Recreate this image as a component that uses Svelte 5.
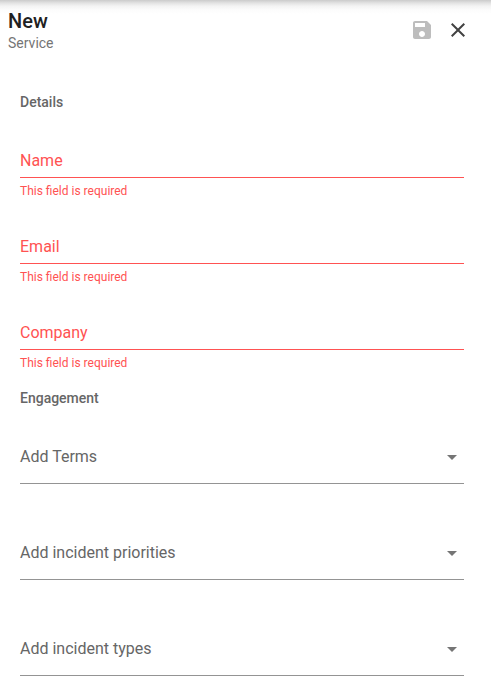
<script>
  let fields = $state([
    { id: 'name', label: 'Name', type: 'text', value: '' },
    { id: 'email', label: 'Email', type: 'email', value: '' },
    { id: 'company', label: 'Company', type: 'text', value: '' }
  ]);
  let choices = $state([
    { id: 'terms', label: 'Add Terms', value: '' },
    { id: 'priorities', label: 'Add incident priorities', value: '' },
    { id: 'types', label: 'Add incident types', value: '' }
  ]);
  const valid = $derived(fields.every((f) => f.value));
</script>

<main>
  <header>
    <div class="titles">
      <h1>New</h1>
      <p>Service</p>
    </div>
    <div class="actions">
      <button type="submit" form="service" aria-label="Save" disabled={!valid}>
        <svg viewBox="0 0 24 24" width="24" height="24" aria-hidden="true">
          <path d="M17 3H5c-1.110 0-2 .9-2 2v14c0 1.100.890 2 2 2h14c1.100 0 2-.9 2-2V7l-4-4zm-5 16c-1.660 0-3-1.340-3-3s1.340-3 3-3 3 1.340 3 3-1.340 3-3 3zm3-10H5V5h10v4z" />
        </svg>
      </button>
      <button type="button" aria-label="Close">
        <svg viewBox="0 0 24 24" width="24" height="24" aria-hidden="true">
          <path d="M19 6.410L17.590 5 12 10.590 6.410 5 5 6.410 10.590 12 5 17.590 6.410 19 12 13.410 17.590 19 19 17.590 13.410 12z" />
        </svg>
      </button>
    </div>
  </header>

  <form id="service" novalidate onsubmit={(e) => e.preventDefault()}>
    <section>
      <h2>Details</h2>
      <div class="fields">
        {#each fields as field (field.id)}
          <div class="field" class:invalid={!field.value}>
            <div class="control" class:filled={field.value}>
              <input id={field.id} type={field.type} bind:value={field.value} required />
              <label for={field.id}>{field.label}</label>
            </div>
            {#if !field.value}
              <p class="hint">This field is required</p>
            {/if}
          </div>
        {/each}
      </div>
    </section>

    <section>
      <h2>Engagement</h2>
      <div class="choices">
        {#each choices as choice (choice.id)}
          <div class="control tall" class:filled={choice.value}>
            <select id={choice.id} bind:value={choice.value}>
              <option value=""></option>
            </select>
            <label for={choice.id}>{choice.label}</label>
            <svg class="arrow" viewBox="0 0 24 24" width="24" height="24" aria-hidden="true">
              <path d="M7 10l5 5 5-5z" />
            </svg>
          </div>
        {/each}
      </div>
    </section>
  </form>
</main>

<style>
  :global(body) {
    margin: 0;
    background: #fff;
  }
  main {
    font-family: Roboto, 'Liberation Sans', sans-serif;
    color: #666;
    background: linear-gradient(#cbcbcb, #e2e2e2 3px, #f3f3f3 6px, #fcfcfc 10px, #fff 14px) no-repeat;
    padding-bottom: 19px;
  }
  h1,
  h2,
  p {
    margin: 0;
  }
  header {
    display: flex;
    justify-content: space-between;
    align-items: flex-start;
    padding: 9px 15px 0 8px;
  }
  h1 {
    font-size: 20px;
    line-height: 24px;
    font-weight: 500;
    color: #212121;
  }
  .titles p {
    font-size: 14px;
    line-height: 20px;
    color: #757575;
  }
  .actions {
    display: flex;
    padding-top: 3px;
  }
  button {
    display: grid;
    place-items: center;
    width: 36px;
    height: 36px;
    padding: 0;
    border: 0;
    background: none;
    color: #424242;
    cursor: pointer;
  }
  button:disabled {
    color: #bdbdbd;
    cursor: default;
  }
  svg {
    fill: currentColor;
  }
  form {
    display: flex;
    flex-direction: column;
    gap: 17px;
    padding: 39px 27px 0 20px;
  }
  h2 {
    margin-bottom: 37px;
    font-size: 14px;
    line-height: 20px;
    font-weight: 500;
  }
  .fields {
    display: flex;
    flex-direction: column;
    gap: 36px;
  }
  .choices {
    display: flex;
    flex-direction: column;
    gap: 57px;
  }
  .control {
    display: grid;
    grid-template-columns: 1fr 24px;
    height: 28px;
    border-bottom: 1px solid #949494;
    font-size: 16px;
    line-height: 24px;
  }
  .control.tall {
    height: 38px;
  }
  .control > * {
    grid-row: 1;
  }
  input,
  select {
    grid-column: 1 / -1;
    width: 100%;
    height: 24px;
    padding: 0;
    border: 0;
    outline: 0;
    background: none;
    font: inherit;
    color: #212121;
    appearance: none;
  }
  label {
    grid-column: 1;
    pointer-events: none;
    transform-origin: left top;
    transition: transform 0.2s;
  }
  .filled label,
  input:focus + label {
    transform: translateY(-20px) scale(0.75);
  }
  .arrow {
    grid-column: 2;
    pointer-events: none;
    fill: #757575;
  }
  .invalid {
    color: #ff5252;
  }
  .invalid .control {
    border-color: #ff5252;
  }
  .hint {
    margin-top: 5px;
    font-size: 12px;
    line-height: 16px;
  }
</style>
